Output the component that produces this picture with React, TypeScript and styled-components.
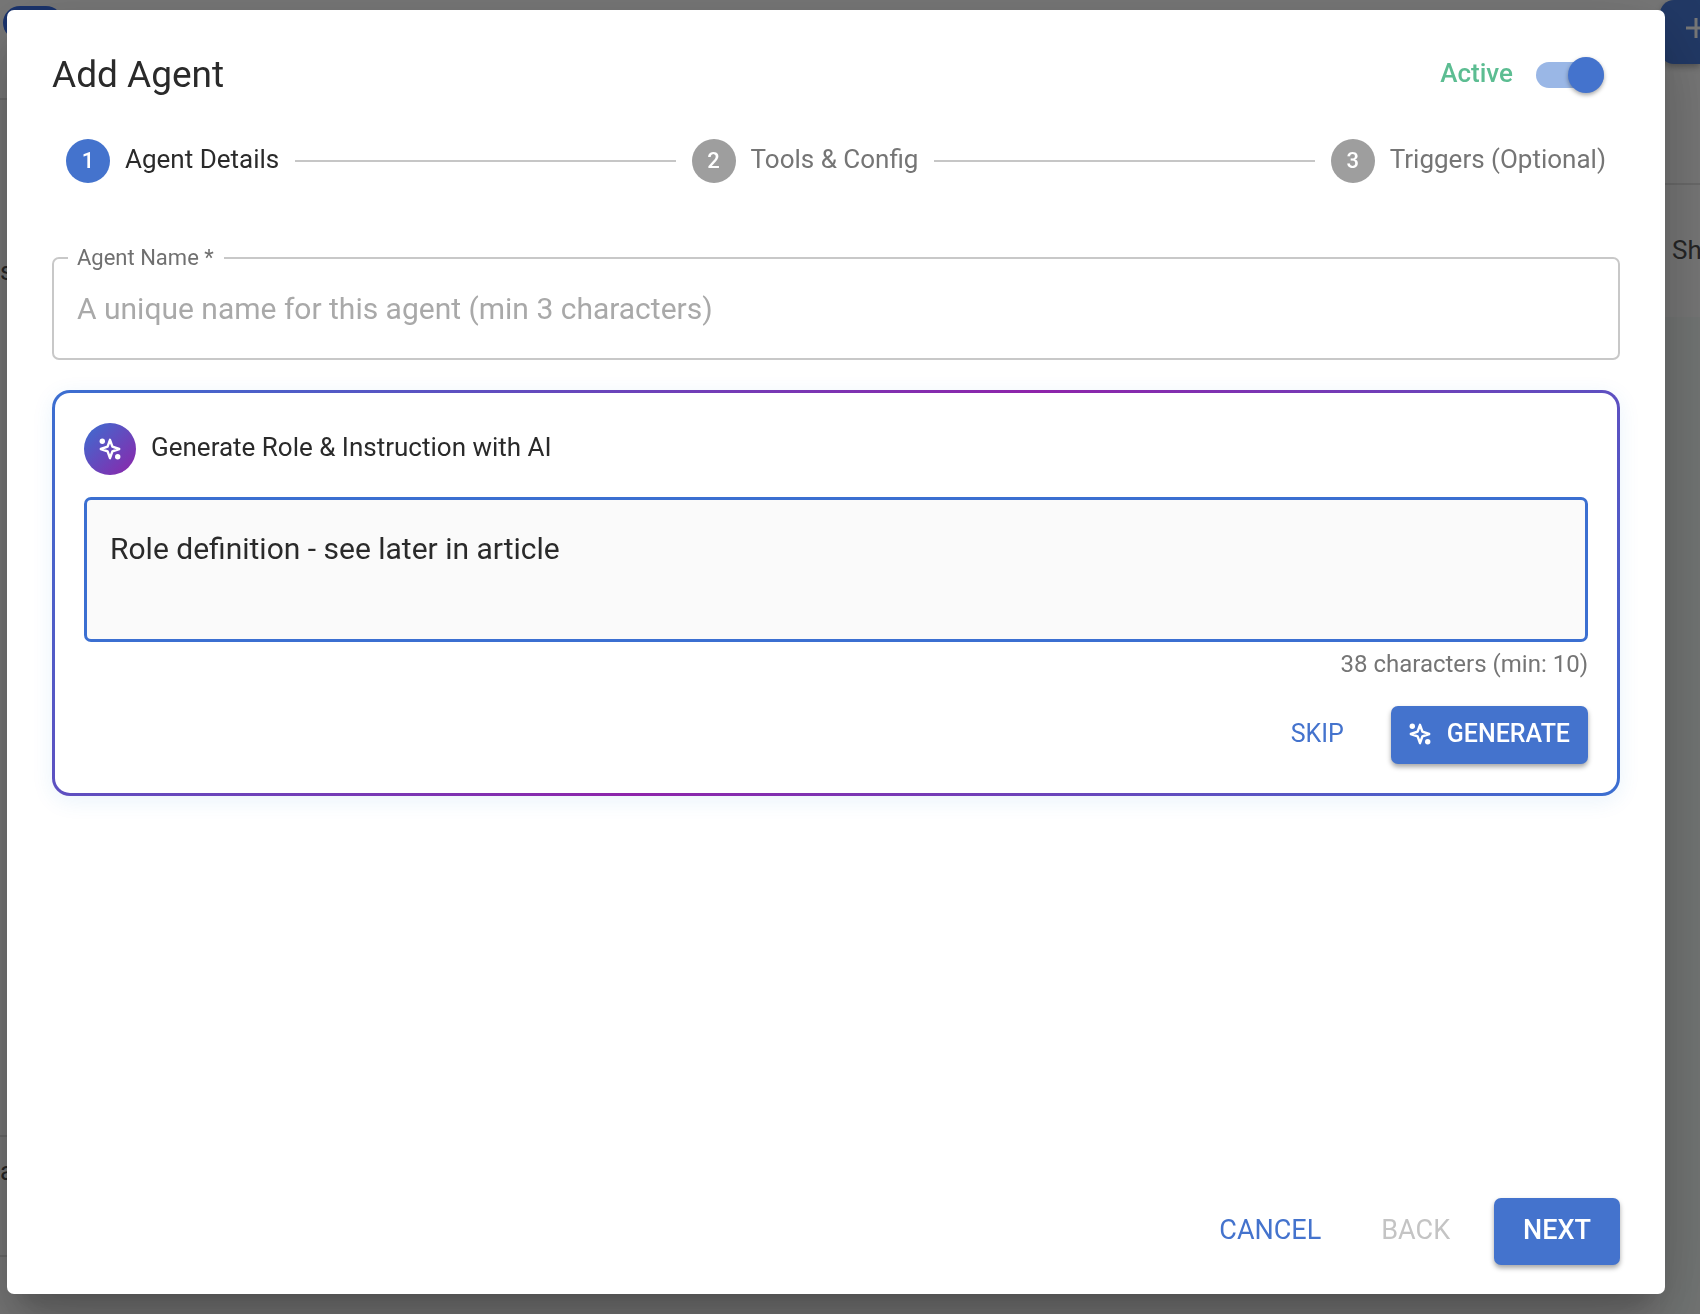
import React, { useState } from "react";
import styled, { createGlobalStyle } from "styled-components";

const blue = "#4473cd";
const gradientBlue = "#3b6fd1";
const purple = "#8e24aa";

const GlobalStyle = createGlobalStyle`
  *, *::before, *::after { box-sizing: border-box; }
  body {
    margin: 0;
    font-family: Roboto, "Liberation Sans", sans-serif;
    color: #2a2a2a;
    background: #f0f0f0;
  }
  button, input, textarea { font: inherit; }
`;

/* ---------- page behind the dialog ---------- */

const Page = styled.div`
  display: flex;
  justify-content: space-between;
  height: 100vh;
  overflow: hidden;
`;

const PageColumn = styled.div<{ $width: number }>`
  display: flex;
  flex-direction: column;
  width: ${(p) => p.$width}px;
`;

const PageCell = styled.div<{ $height: number; $line?: boolean; $pad?: string }>`
  flex: none;
  height: ${(p) => p.$height}px;
  padding: ${(p) => p.$pad ?? "0"};
  border-bottom: ${(p) => (p.$line ? "2px solid #d6d6d6" : "0")};
  font-size: 26px;
  line-height: 32px;
  white-space: nowrap;
  color: #4c4c4c;
`;

const PageShade = styled.div`
  flex: 1;
  background: #e8edeb;
`;

const Chip = styled.span`
  display: block;
  width: 60px;
  height: 34px;
  border-radius: 17px;
  background: #3568dc;
`;

const CreateButton = styled.button`
  display: flex;
  align-items: center;
  width: 40px;
  height: 64px;
  padding: 0 0 8px 24px;
  border: 0;
  border-radius: 14px 0 0 14px;
  color: #f0f0f0;
  background: ${blue};
  box-shadow: 0 3px 6px rgba(0, 0, 0, 0.3);
  svg { flex: none; }
`;

/* ---------- dialog ---------- */

const Backdrop = styled.div`
  position: fixed;
  inset: 0;
  display: flex;
  padding: 10px 35px 20px 7px;
  background: rgba(0, 0, 0, 0.5);
`;

const Dialog = styled.section`
  flex: 1;
  display: flex;
  flex-direction: column;
  padding: 28px 45px 29px;
  border-radius: 7px;
  background: #fff;
  box-shadow: 0 20px 27px -13px rgba(0, 0, 0, 0.2),
    0 43px 68px 5px rgba(0, 0, 0, 0.14), 0 16px 83px 14px rgba(0, 0, 0, 0.12);
`;

const DialogHeader = styled.header`
  display: flex;
  align-items: center;
  justify-content: space-between;
  height: 74px;
`;

const Title = styled.h2`
  margin: 0;
  font-size: 37px;
  font-weight: 400;
  line-height: 58px;
`;

const SwitchLabel = styled.label`
  display: flex;
  align-items: center;
  gap: 23px;
  padding-right: 16px;
  font-size: 26px;
  font-weight: 500;
  line-height: 36px;
  color: #5cbd92;
`;

const LabelText = styled.span`
  padding-bottom: 5px;
`;

const Switch = styled.input`
  appearance: none;
  display: flex;
  align-items: center;
  justify-content: flex-start;
  width: 68px;
  height: 26px;
  margin: 0;
  border-radius: 13px;
  background: #bdbdbd;
  cursor: pointer;
  &::before {
    content: "";
    flex: none;
    width: 36px;
    height: 36px;
    border-radius: 50%;
    background: #fafafa;
    box-shadow: 0 2px 4px rgba(0, 0, 0, 0.35);
  }
  &:checked {
    justify-content: flex-end;
    background: #9ab7e6;
  }
  &:checked::before { background: ${blue}; }
`;

const Stepper = styled.ol`
  display: flex;
  align-items: center;
  margin: 27px 0 0;
  padding: 0;
  list-style: none;
`;

const Step = styled.li<{ $active?: boolean }>`
  display: flex;
  align-items: center;
  gap: 15px;
  padding: 0 14px;
  font-size: 26px;
  line-height: 36px;
  color: ${(p) => (p.$active ? "#2a2a2a" : "#757575")};
`;

const StepNumber = styled.span<{ $active?: boolean }>`
  display: grid;
  place-items: center;
  width: 44px;
  height: 44px;
  border-radius: 50%;
  font-size: 22px;
  font-weight: 500;
  color: #fff;
  background: ${(p) => (p.$active ? blue : "#9e9e9e")};
`;

const Connector = styled.li`
  flex: 1;
  height: 2px;
  margin: 0 2px;
  background: #c6c6c6;
`;

const OutlinedField = styled.fieldset`
  min-width: 0;
  margin: 61px 0 0;
  padding: 0 23px;
  border: 2px solid #c8c8c8;
  border-radius: 7px;
`;

const Legend = styled.legend`
  margin-left: -9px;
  padding: 0 10px 0 9px;
  font-size: 22px;
  line-height: 28px;
  color: #707070;
`;

const TextInput = styled.input`
  display: block;
  width: 100%;
  height: 86px;
  padding: 0 0 14px;
  border: 0;
  outline: 0;
  font-size: 30px;
  color: #2a2a2a;
  background: transparent;
  &::placeholder { color: #a9a9a9; opacity: 1; }
`;

const AiCard = styled.section`
  display: flex;
  flex-direction: column;
  margin-top: 30px;
  padding: 30px 29px 29px;
  border: 3px solid transparent;
  border-radius: 18px;
  background: linear-gradient(#fff, #fff) padding-box,
    linear-gradient(135deg, ${gradientBlue} 0%, ${purple} 50%, ${gradientBlue} 100%) border-box;
  box-shadow: 0 5px 22px rgba(25, 118, 210, 0.09);
`;

const AiHeading = styled.label`
  display: flex;
  align-items: center;
  gap: 15px;
  font-size: 26px;
  line-height: 36px;
`;

const AiBadge = styled.span`
  display: grid;
  place-items: center;
  width: 52px;
  height: 52px;
  border-radius: 50%;
  color: #fff;
  background: linear-gradient(135deg, ${gradientBlue}, ${purple});
`;

const RoleInput = styled.textarea`
  display: block;
  width: 100%;
  height: 145px;
  margin-top: 22px;
  padding: 29px 23px;
  border: 3px solid ${gradientBlue};
  border-radius: 7px;
  outline: 0;
  resize: none;
  font-size: 30px;
  line-height: 40px;
  color: #2a2a2a;
  background: #fafafa;
`;

const HelperText = styled.p`
  margin: 6px 0 0;
  font-size: 24px;
  line-height: 32px;
  text-align: right;
  color: #757575;
`;

const Actions = styled.div<{ $top: string; $gap: number }>`
  display: flex;
  justify-content: flex-end;
  gap: ${(p) => p.$gap}px;
  margin-top: ${(p) => p.$top};
`;

const buttonPadding = (large?: boolean, filled?: boolean) =>
  large ? (filled ? 29 : 16) : 18;

const Button = styled.button<{ $filled?: boolean; $large?: boolean }>`
  display: flex;
  align-items: center;
  gap: 16px;
  height: ${(p) => (p.$large ? 67 : 58)}px;
  padding: 0 ${(p) => buttonPadding(p.$large, p.$filled)}px 3px;
  border: 0;
  border-radius: 7px;
  font-size: ${(p) => (p.$large ? 27 : 25)}px;
  font-weight: ${(p) => (p.$filled ? 500 : 400)};
  text-transform: uppercase;
  color: ${(p) => (p.$filled ? "#fff" : blue)};
  background: ${(p) => (p.$filled ? blue : "transparent")};
  box-shadow: ${(p) => (p.$filled ? "0 3px 5px rgba(0, 0, 0, 0.35)" : "none")};
  cursor: pointer;
  &:disabled { color: #c4c4c4; cursor: default; }
`;

function Sparkles() {
  return (
    <svg width="22" height="22" viewBox="0 0 22 22" fill="none" aria-hidden="true">
      <path
        d="M11 1.8 L13.4 8.6 L20.2 11 L13.4 13.4 L11 20.2 L8.6 13.4 L1.8 11 L8.6 8.6 Z"
        stroke="currentColor"
        strokeWidth="2.4"
        strokeLinejoin="round"
      />
      <circle cx="3.3" cy="3.3" r="2.7" fill="currentColor" />
      <circle cx="18.7" cy="18.7" r="2.7" fill="currentColor" />
    </svg>
  );
}

const steps = ["Agent Details", "Tools & Config", "Triggers (Optional)"];

export default function App() {
  const [active, setActive] = useState(true);
  const [name, setName] = useState("");
  const [role, setRole] = useState("Role definition - see later in article");

  return (
    <>
      <GlobalStyle />
      <Page aria-hidden="true">
        <PageColumn $width={64}>
          <PageCell $height={100} $line $pad="6px 0 0 3px">
            <Chip />
          </PageCell>
          <PageCell $height={217} $pad="155px 0 0">s</PageCell>
          <PageCell $height={820} $line />
          <PageCell $height={120} $line $pad="18px 0 0">a</PageCell>
        </PageColumn>
        <PageColumn $width={40}>
          <PageCell $height={185} $line>
            <CreateButton tabIndex={-1}>
              <svg width="24" height="24" viewBox="0 0 24 24" stroke="currentColor" strokeWidth="3">
                <path d="M2 12h20M12 2v20" />
              </svg>
            </CreateButton>
          </PageCell>
          <PageCell $height={132} $pad="49px 0 0 12px">Sh</PageCell>
          <PageShade />
        </PageColumn>
      </Page>

      <Backdrop>
        <Dialog role="dialog" aria-modal="true" aria-labelledby="dialog-title">
          <DialogHeader>
            <Title id="dialog-title">Add Agent</Title>
            <SwitchLabel>
              <LabelText>Active</LabelText>
              <Switch
                type="checkbox"
                role="switch"
                checked={active}
                onChange={(e) => setActive(e.target.checked)}
              />
            </SwitchLabel>
          </DialogHeader>

          <Stepper>
            {steps.map((label, i) => (
              <React.Fragment key={label}>
                {i > 0 && <Connector aria-hidden="true" />}
                <Step $active={i === 0} aria-current={i === 0 ? "step" : undefined}>
                  <StepNumber $active={i === 0}>{i + 1}</StepNumber>
                  <LabelText>{label}</LabelText>
                </Step>
              </React.Fragment>
            ))}
          </Stepper>

          <OutlinedField>
            <Legend>
              <label htmlFor="agent-name">Agent Name *</label>
            </Legend>
            <TextInput
              id="agent-name"
              required
              placeholder="A unique name for this agent (min 3 characters)"
              value={name}
              onChange={(e) => setName(e.target.value)}
            />
          </OutlinedField>

          <AiCard>
            <AiHeading htmlFor="agent-role">
              <AiBadge>
                <Sparkles />
              </AiBadge>
              <LabelText>Generate Role &amp; Instruction with AI</LabelText>
            </AiHeading>
            <RoleInput id="agent-role" value={role} onChange={(e) => setRole(e.target.value)} />
            <HelperText>{role.length} characters (min: 10)</HelperText>
            <Actions $top="26px" $gap={29}>
              <Button type="button">Skip</Button>
              <Button type="button" $filled>
                <Sparkles />
                Generate
              </Button>
            </Actions>
          </AiCard>

          <Actions $top="auto" $gap={28}>
            <Button type="button" $large>Cancel</Button>
            <Button type="button" $large disabled>Back</Button>
            <Button type="button" $large $filled>Next</Button>
          </Actions>
        </Dialog>
      </Backdrop>
    </>
  );
}
